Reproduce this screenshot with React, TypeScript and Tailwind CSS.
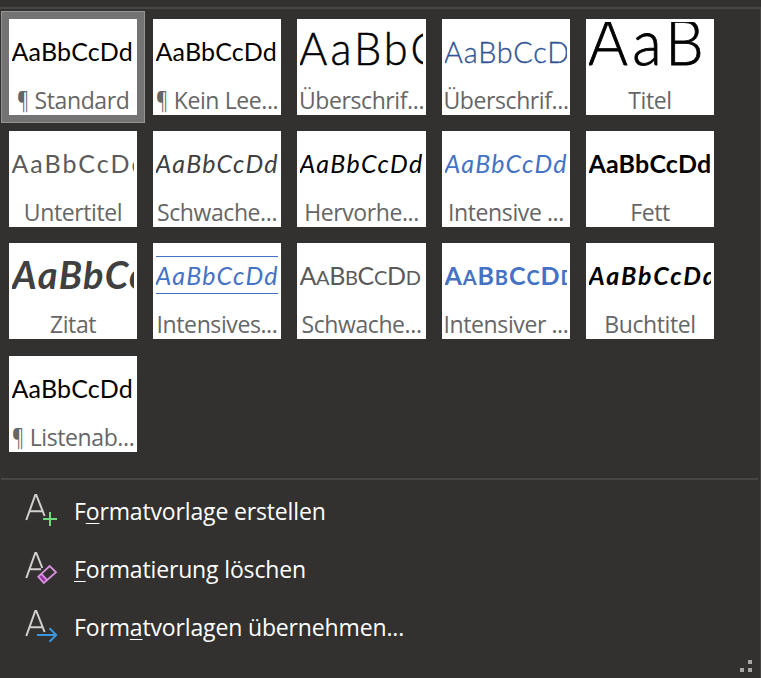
import React from "react";

type StyleItem = {
  label: string;
  pilcrow?: boolean;
  sampleClass: string;
  smallCaps?: boolean;
  ruled?: boolean;
  selected?: boolean;
  wide?: boolean;
};

const base = "text-[25px] leading-[59px] -indent-[0.6px]";

const rows: StyleItem[][] = [
  [
    { label: "Standard", pilcrow: true, sampleClass: `${base} tracking-[0.2px] text-black`, selected: true },
    { label: "Kein Lee...", pilcrow: true, sampleClass: `${base} tracking-[0.2px] text-black` },
    {
      label: "Überschrif...",
      sampleClass:
        "text-[46px] leading-[52px] font-light text-black origin-left scale-x-[0.94] w-[134px] tracking-[3.2px] -indent-px [-webkit-text-stroke:0.5px_#000]",
      wide: true,
    },
    {
      label: "Überschrif...",
      sampleClass:
        "text-[30px] leading-[58px] font-light text-[#2f5496] origin-left scale-x-[0.96] w-[130px] tracking-[0.8px] -indent-px [-webkit-text-stroke:0.35px_#2f5496]",
    },
    {
      label: "Titel",
      sampleClass:
        "text-[64px] leading-[38px] font-light text-black origin-left scale-x-[0.95] w-[142px] tracking-[4.5px] -indent-px [-webkit-text-stroke:0.8px_#000]",
    },
  ],
  [
    { label: "Untertitel", sampleClass: `${base} text-[#5a5a5a] tracking-[2px]` },
    { label: "Schwache...", sampleClass: `${base} italic text-[#404040] tracking-[1.3px]` },
    { label: "Hervorhe...", sampleClass: `${base} italic text-black tracking-[1.4px]`, wide: true },
    { label: "Intensive ...", sampleClass: `${base} italic text-[#4472c4] tracking-[1.3px]` },
    { label: "Fett", sampleClass: `${base} font-bold text-black tracking-[0.2px]` },
  ],
  [
    { label: "Zitat", sampleClass: "text-[38px] leading-[57px] font-bold italic text-[#404040] tracking-[1.4px]" },
    { label: "Intensives...", sampleClass: `${base} italic text-[#4472c4] tracking-[1.3px]`, ruled: true },
    { label: "Schwache...", sampleClass: `${base} text-[#5a5a5a] tracking-[-0.35px]`, smallCaps: true, wide: true },
    { label: "Intensiver ...", sampleClass: `${base} font-bold text-[#4472c4] tracking-[0.9px]`, smallCaps: true },
    { label: "Buchtitel", sampleClass: `${base} font-bold italic text-black tracking-[1.9px]` },
  ],
  [{ label: "Listenab...", pilcrow: true, sampleClass: `${base} tracking-[0.2px] text-black` }],
];

function Sample({ item }: { item: StyleItem }) {
  return (
    <div className="relative mx-[3px] h-[66px] overflow-hidden">
      {item.ruled && <div className="absolute inset-x-0 top-[10px] h-[38px] border-y border-[#4472c4]" />}
      <div className={`whitespace-nowrap font-[Lato,sans-serif] ${item.sampleClass}`}>
        {item.smallCaps
          ? ["A", "B", "C", "D"].map((c) => (
              <React.Fragment key={c}>
                {c}
                <span className="text-[20px] leading-none">{c}</span>
              </React.Fragment>
            ))
          : "AaBbCcDd"}
      </div>
    </div>
  );
}

function Tile({ item }: { item: StyleItem }) {
  return (
    <div
      className={`h-28 border p-[7px] ${item.wide ? "w-[145px]" : "w-36"} ${
        item.selected ? "border-[#979593] bg-[#737373]" : "border-transparent"
      }`}
    >
      <div className="h-24 overflow-hidden bg-white pt-[3px]">
        <Sample item={item} />
        <div className="-mt-px flex h-[26px] justify-center whitespace-pre text-[23px] leading-[26px] tracking-[-0.4px] text-[#666]">
          {item.pilcrow && (
            <span className="w-[18px]">
              <span className="inline-block origin-left scale-x-[0.8]">¶</span>
            </span>
          )}
          <span>{item.label}</span>
        </div>
      </div>
    </div>
  );
}

const commands = [
  {
    text: ["F", "o", "rmatvorlage erstellen"],
    icon: (
      <>
        <path d="M1.3 26 L10.3 1 H11.3 L19.6 22 M4.7 17.2 H17.6" fill="none" stroke="#d2d0ce" strokeWidth="2" />
        <path d="M18 25 H32 M25 18 V32" stroke="#6fdc7c" strokeWidth="2" />
      </>
    ),
  },
  {
    text: ["", "F", "ormatierung löschen"],
    icon: (
      <>
        <path d="M1.3 26 L10.3 1 H11.3 L17.3 16 M4.7 17.2 H16" fill="none" stroke="#d2d0ce" strokeWidth="2" />
        <path d="M13 25 L16.5 21.5 L22 27.5 L18.5 30.5 Z" fill="#9b2fa5" />
        <path d="M13.3 24.7 L24.7 14 L31 20.3 L18.8 31 Z M16.3 21.8 L22 27.8" fill="none" stroke="#d791dc" strokeWidth="1.8" />
      </>
    ),
  },
  {
    text: ["Form", "a", "tvorlagen übernehmen..."],
    icon: (
      <>
        <path d="M1.3 26 L10.3 1 H11.3 L19.6 22 M4.7 17.2 H17.6" fill="none" stroke="#d2d0ce" strokeWidth="2" />
        <path d="M12 25 H31 M24.5 18.3 L31.2 25 L24.5 31.7" fill="none" stroke="#3a96dd" strokeWidth="2" />
      </>
    ),
  },
];

export default function App() {
  return (
    <div className="flex h-[678px] w-[761px] flex-col overflow-hidden bg-[#323130] font-['Open_Sans','Noto_Sans',sans-serif]">
      <div className="h-[9px] shrink-0 border-b-2 border-[#484644]" />
      <div className="flex flex-1 flex-col border-r border-[#484644]">
        <div className="flex flex-col pl-px pt-0.5">
          {rows.map((row, i) => (
            <div key={i} className="flex last:mt-px">
              {row.map((item, j) => (
                <Tile key={j} item={item} />
              ))}
            </div>
          ))}
        </div>
        <div className="ml-px mr-[2px] mt-[18px] h-0.5 bg-[#484644]" />
        <div className="flex flex-col pt-[2px]">
          {commands.map((cmd, i) => (
            <div key={i} className="flex h-[58px] items-center pl-[25px]">
              <svg width="34" height="34" viewBox="0 0 34 34" className="mr-[15px] shrink-0">
                {cmd.icon}
              </svg>
              <div className="whitespace-nowrap text-[23px] leading-8 tracking-[-0.15px] text-white">
                {cmd.text[0]}
                <span className="underline decoration-1 underline-offset-[3px]">{cmd.text[1]}</span>
                {cmd.text[2]}
              </div>
            </div>
          ))}
        </div>
        <div className="mr-2 mt-auto mb-[6px] grid grid-cols-2 gap-1 self-end">
          <i className="size-1" />
          <i className="size-1 bg-[#aaa8a6]" />
          <i className="size-1 bg-[#aaa8a6]" />
          <i className="size-1 bg-[#aaa8a6]" />
        </div>
      </div>
    </div>
  );
}
